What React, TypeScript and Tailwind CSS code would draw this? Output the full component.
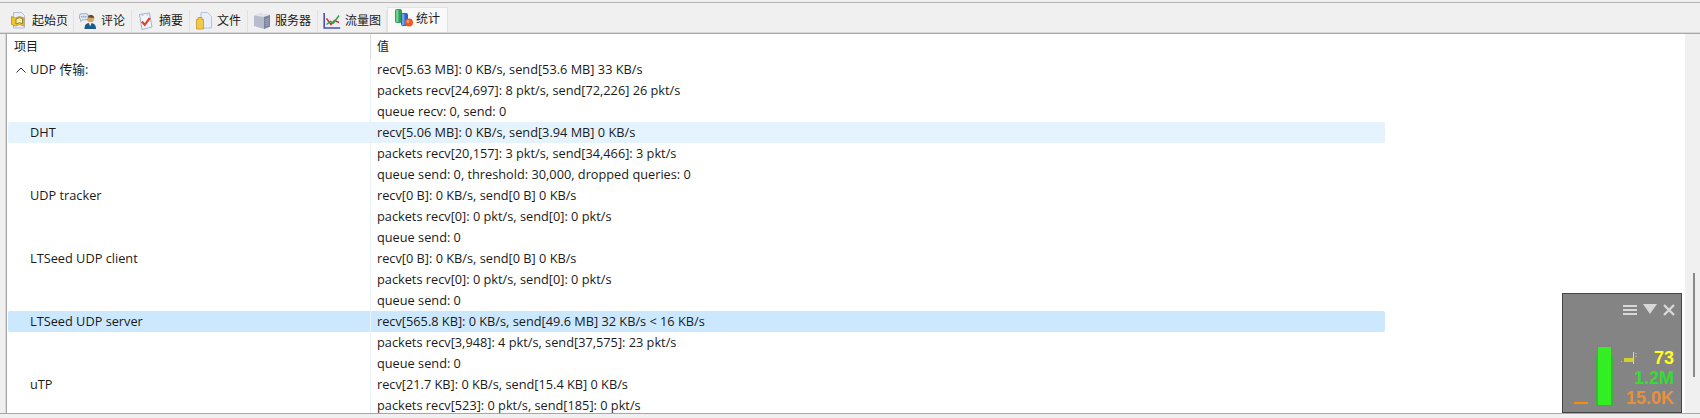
const FONT = "font-['Open_Sans','Noto_Sans_CJK_SC',sans-serif]"

function HomeIcon() {
  return (
    <svg width="18" height="18" viewBox="0 0 18 18">
      <path d="M3.500 .5h8l3 3v12.500h-11z" fill="#eceff8" stroke="#b3bbd4" />
      <path d="M1.500 4.500l4 1.500 4-1.500 4.500 1.500v8l-4.500-1.500-4 1.500-4-1.500z" fill="#f4c62e" stroke="#b58f1c" strokeWidth="0.8" />
      <path d="M6 7l3.500-1.300 3 1v5l-3-1-3.500 1.300z" fill="#fdf0a8" stroke="#7d6a20" strokeWidth="0.8" />
    </svg>
  )
}

function CommentIcon() {
  return (
    <svg width="18" height="18" viewBox="0 0 18 18">
      <path d="M5.500 17c0-4.500 2-6 5.500-6s6 1.500 6 6z" fill="#1c5a8c" />
      <path d="M9.800 11l1.400 3.500 1.400-3.500z" fill="#dce8f0" />
      <circle cx="11.500" cy="6.500" r="3.700" fill="#d8a562" />
      <path d="M7.800 6c.5-3.500 7-4.500 7.500 0-2.500 0-5-1.300-7.500 0z" fill="#6a4726" />
      <path d="M.5 3.500A1.800 1.800 0 0 1 2.300 1.700h4.900a1.800 1.800 0 0 1 1.800 1.800v2.500a1.800 1.800 0 0 1-1.800 1.800H3.800L1.600 9.500V7.500A1.800 1.800 0 0 1 .5 6z" fill="#dde5f3" stroke="#8a97b4" strokeWidth="0.7" />
      <path d="M2.300 4.800h1M4.300 4.800h1M6.300 4.800h1" stroke="#566788" />
    </svg>
  )
}

function SummaryIcon() {
  return (
    <svg width="18" height="18" viewBox="0 0 18 18">
      <path d="M2.500 2.500l10-1.500 2.500 14-10 2.500z" fill="#f2f5fc" stroke="#a5b1cd" />
      <path d="M4.500 1h2v3h-2zM9.500 .5h2v3h-2z" fill="#c5cde0" />
      <path d="M4.800 9.500l3 3.300 5-6.800" fill="none" stroke="#e4432a" strokeWidth="2.200" />
    </svg>
  )
}

function FilesIcon() {
  return (
    <svg width="18" height="18" viewBox="0 0 18 18">
      <path d="M6 .5h6.500l4 4v11.500H6z" fill="#e6effb" stroke="#b3c4de" />
      <path d="M1.500 7.500h1.500V5.500h4v2h1.500v9.500h-7z" fill="#f3c94c" stroke="#c4971f" strokeWidth="0.8" />
    </svg>
  )
}

function ServerIcon() {
  return (
    <svg width="18" height="18" viewBox="0 0 18 18">
      <path d="M1 3.500L7 1.500l10 1.500v11.500l-6 2.500L1 14z" fill="#b7bccd" />
      <path d="M1 3.500L7 1.500l10 1.500-6 2z" fill="#e1e4ec" />
      <path d="M11 5l6-2v11.500l-6 2.500z" fill="#7c83a0" />
      <path d="M12 8l4-1.500M12 10l4-1.500M12 12l4-1.500M12 14l4-1.500" stroke="#aab0c6" strokeWidth="0.8" />
    </svg>
  )
}

function TrafficIcon() {
  return (
    <svg width="18" height="18" viewBox="0 0 18 18">
      <path d="M1.200 1v15h16" fill="none" stroke="#4652bb" strokeWidth="1.600" />
      <path d="M3.500 6.500l4.500 6 3.500-4 4.500 2" fill="none" stroke="#e02a4c" strokeWidth="1.500" />
      <path d="M3.500 12.500l4-3 3 1.500 5.500-7.500" fill="none" stroke="#2ca84e" strokeWidth="1.500" />
    </svg>
  )
}

function StatsIcon() {
  return (
    <svg width="20" height="20" viewBox="0 0 20 20">
      <rect x="1" y="0" width="7" height="14" rx="2" fill="#2f9e58" />
      <rect x="2" y="1" width="2.500" height="12" fill="#6bd391" />
      <rect x="7" y="4" width="7" height="13" rx="2" fill="#2c62c4" />
      <rect x="8" y="5" width="2.500" height="11" fill="#72a0ea" />
      <circle cx="15" cy="13.500" r="4" fill="#ec5a24" />
      <circle cx="14" cy="12.500" r="1.400" fill="#f7a07a" />
    </svg>
  )
}

const tabs = [
  { label: '起始页', width: 'w-[69px]', icon: <HomeIcon /> },
  { label: '评论', width: 'w-[58px]', icon: <CommentIcon /> },
  { label: '摘要', width: 'w-[58px]', icon: <SummaryIcon /> },
  { label: '文件', width: 'w-[58px]', icon: <FilesIcon /> },
  { label: '服务器', width: 'w-[70px]', icon: <ServerIcon /> },
  { label: '流量图', width: 'w-[69px]', icon: <TrafficIcon /> },
]

const rows = [
  { name: 'UDP 传输:', value: 'recv[5.63 MB]: 0 KB/s, send[53.6 MB] 33 KB/s', group: true },
  { name: '', value: 'packets recv[24,697]: 8 pkt/s, send[72,226] 26 pkt/s' },
  { name: '', value: 'queue recv: 0, send: 0' },
  { name: 'DHT', value: 'recv[5.06 MB]: 0 KB/s, send[3.94 MB] 0 KB/s', tone: 'hover' },
  { name: '', value: 'packets recv[20,157]: 3 pkt/s, send[34,466]: 3 pkt/s' },
  { name: '', value: 'queue send: 0, threshold: 30,000, dropped queries: 0' },
  { name: 'UDP tracker', value: 'recv[0 B]: 0 KB/s, send[0 B] 0 KB/s' },
  { name: '', value: 'packets recv[0]: 0 pkt/s, send[0]: 0 pkt/s' },
  { name: '', value: 'queue send: 0' },
  { name: 'LTSeed UDP client', value: 'recv[0 B]: 0 KB/s, send[0 B] 0 KB/s' },
  { name: '', value: 'packets recv[0]: 0 pkt/s, send[0]: 0 pkt/s' },
  { name: '', value: 'queue send: 0' },
  { name: 'LTSeed UDP server', value: 'recv[565.8 KB]: 0 KB/s, send[49.6 MB] 32 KB/s < 16 KB/s', tone: 'selected' },
  { name: '', value: 'packets recv[3,948]: 4 pkt/s, send[37,575]: 23 pkt/s' },
  { name: '', value: 'queue send: 0' },
  { name: 'uTP', value: 'recv[21.7 KB]: 0 KB/s, send[15.4 KB] 0 KB/s' },
  { name: '', value: 'packets recv[523]: 0 pkt/s, send[185]: 0 pkt/s' },
]

function SpeedWidget() {
  return (
    <div className="absolute left-[1562px] top-[293px] flex h-[120px] w-[120px] flex-col border border-[#444444] bg-[#848484]">
      <div className="flex justify-end pt-[10px] pr-[6px]">
        <svg width="52" height="12" viewBox="0 0 52 12">
          <path d="M0 1h14v2H0zM0 5h14v2H0zM0 9h14v2H0z" fill="#d8d8d8" />
          <path d="M20 0h14l-7 10z" fill="#d8d8d8" />
          <path d="M41 1l10 10M51 1L41 11" stroke="#d8d8d8" strokeWidth="2.400" />
        </svg>
      </div>
      <div className="flex flex-1 items-end pb-[4px] pl-[11px] pr-[7px]">
        <div className="mb-[4px] h-[2px] w-[14px] bg-[#ff8c00]" />
        <div className="relative mb-[2px] ml-[8px] h-[50px] w-[17px] border border-[#3fae3f]">
          <div className="absolute -top-[12px] left-0 h-[4px] w-[15px] border-x border-t border-[#3fae3f]" />
          <div className="absolute -top-[10px] bottom-0 left-[1px] w-[13px] bg-[#33ee22]" />
        </div>
        <div className="ml-[7px] flex flex-1 flex-col items-end font-['Liberation_Sans',sans-serif] text-[18px] leading-[20px] font-bold">
          <div className="flex w-full items-center justify-between">
            <svg width="17" height="14" viewBox="0 0 17 14">
              <path d="M1 10h1v1H1zM4 7h9v4H4z" fill="#d0d030" />
              <path d="M13.500 1v12" stroke="#e8e830" />
              <path d="M15.500 2h1v1h-1zM15.500 5h1v1h-1z" fill="#e8e830" />
            </svg>
            <span className="text-[#ffff22]">73</span>
          </div>
          <span className="text-[#33dd33]">1.2M</span>
          <span className="text-[#e8903a]">15.0K</span>
        </div>
      </div>
    </div>
  )
}

export default function App() {
  return (
    <div className={`relative flex h-[418px] w-[1700px] flex-col overflow-hidden bg-[#f0f0f0] text-[12px] text-[#1a1a1a] ${FONT}`}>
      <div className="mt-[2px] h-[1px] bg-[#b4b4b4]" />
      <div className="flex h-[29px] items-end pl-[5px]">
        {tabs.map((tab) => (
          <div key={tab.label} className={`${tab.width} flex h-[22px] items-center gap-[4px] border-r border-[#e2e2e2] pl-[5px]`}>
            {tab.icon}
            <span>{tab.label}</span>
          </div>
        ))}
        <div className="flex h-[25px] w-[61px] items-center gap-[2px] border-x border-t border-[#e2e2e2] bg-[#f9f9f9] pb-[3px] pl-[6px]">
          <StatsIcon />
          <span>统计</span>
        </div>
      </div>
      <div className="h-[1px] bg-[#d8d8d8]" />
      <div className="flex h-[381px] border-y border-[#a8a8a8]">
        <div className="w-[6px] border-r border-[#d8d8d8]" />
        <div className="flex-1 border-l border-[#a8a8a8] bg-white">
          <div className="flex h-[25px] w-[1378px] items-center">
            <div className="w-[363px] pl-[7px]">项目</div>
            <div className="h-full border-l border-[#dcdcdc] pl-[6px] leading-[25px]">值</div>
          </div>
          <div className="h-[354px] overflow-hidden text-[12.75px]">
            {rows.map((row, i) => (
              <div
                key={i}
                className={`ml-[1px] flex h-[21px] w-[1377px] items-center rounded-[2px] ${
                  row.tone === 'hover' ? 'bg-[#e5f3ff]' : row.tone === 'selected' ? 'bg-[#cce8ff]' : ''
                }`}
              >
                <div className="flex w-[362px] items-center pl-[22px]">
                  {row.group && (
                    <svg className="-ml-[14px] mr-[4px]" width="10" height="6" viewBox="0 0 10 6">
                      <path d="M.5 5.500L5 1l4.500 4.500" fill="none" stroke="#333333" />
                    </svg>
                  )}
                  {row.name}
                </div>
                <div className="h-full border-l border-[#e8f2fb] pl-[6px] leading-[21px]">{row.value}</div>
              </div>
            ))}
          </div>
        </div>
        <div className="flex w-[15px] justify-center bg-[#f0f0f0]">
          <div className="ml-[2px] mt-[239px] h-[104px] w-[2px] bg-[#8a8a8a]" />
        </div>
      </div>
      <SpeedWidget />
    </div>
  )
}
